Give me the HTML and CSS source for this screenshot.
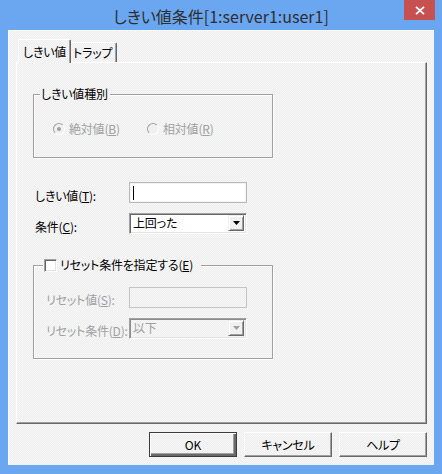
FILE: index.html
```html
<!DOCTYPE html>
<html lang="ja">
<head>
<meta charset="utf-8">
<title>しきい値条件</title>
<link rel="stylesheet" href="styles.css">
</head>
<body>
<div class="window">
  <div class="titlebar">
    <span class="title">しきい値条件[1:server1:user1]</span>
    <div class="close">
      <svg width="10" height="9" viewBox="0 0 10 9"><path d="M1 0.8 L9 8.2 M9 0.8 L1 8.2" stroke="#fff" stroke-width="1.8" fill="none"/></svg>
    </div>
  </div>
  <div class="client bg">
    <div class="tabs">
      <div class="tab active bg">しきい値</div>
      <div class="tab bg">トラップ</div>
    </div>
    <div class="panel bg">
      <div class="group g1">
        <span class="legend bg">しきい値種別</span>
        <div class="radios">
          <label class="radio r1"><span class="dot checked"></span><span>絶対値(<u>B</u>)</span></label>
          <label class="radio"><span class="dot"></span><span>相対値(<u>R</u>)</span></label>
        </div>
      </div>
      <div class="form">
        <span class="lbl">しきい値(<u>T</u>):</span>
        <div class="edit"><span class="caret"></span></div>
        <span class="lbl">条件(<u>C</u>):</span>
        <div class="combo"><span class="val">上回った</span><span class="arrow"><svg width="7" height="4" viewBox="0 0 7 4"><path d="M0 0 H7 L3.5 4 Z" fill="#000"/></svg></span></div>
      </div>
      <div class="group g2">
        <span class="legend bg chk-legend"><span class="check"></span><span>リセット条件を指定する(<u>E</u>)</span></span>
        <div class="form sub">
          <span class="lbl dis">リセット値(<u>S</u>):</span>
          <div class="edit disabled"></div>
          <span class="lbl dis">リセット条件(<u>D</u>):</span>
          <div class="combo disabled"><span class="val">以下</span><span class="arrow"><svg width="7" height="4" viewBox="0 0 7 4"><path d="M0 0 H7 L3.5 4 Z" fill="#a0a0a0"/></svg></span></div>
        </div>
      </div>
    </div>
    <div class="buttons">
      <div class="btn default bg">OK</div>
      <div class="btn bg">キャンセル</div>
      <div class="btn bg">ヘルプ</div>
    </div>
  </div>
</div>
</body>
</html>
```

FILE: styles.css
```css
* { box-sizing: border-box; }
html, body { margin: 0; padding: 0; }
body {
  width: 442px;
  height: 474px;
  overflow: hidden;
  font-family: "Noto Sans CJK JP", "Noto Sans", sans-serif;
  font-feature-settings: "palt";
  font-size: 12px;
  line-height: 16px;
  letter-spacing: -0.2px;
  color: #000;
}
u { text-decoration: underline; text-underline-offset: 1px; }

.bg {
  background: repeating-conic-gradient(#eeeeee 0 25%, #f7f7f7 0 50%) 0 0 / 2px 2px fixed;
}

.window {
  width: 442px;
  height: 474px;
  background: #6ba6f0;
  display: flex;
  flex-direction: column;
}

.titlebar {
  height: 30px;
  display: grid;
  grid-template-columns: 1fr auto 1fr;
}
.title {
  grid-column: 2;
  align-self: center;
  padding-top: 2px;
  font-size: 16px;
  line-height: 20px;
  letter-spacing: 0;
  color: #2e2e2e;
  white-space: nowrap;
}
.close {
  grid-column: 3;
  justify-self: end;
  align-self: start;
  margin-right: 7px;
  width: 31px;
  height: 20px;
  background: #c75050;
  display: flex;
  align-items: center;
  justify-content: center;
}

.client {
  margin: 0 8px;
  height: 435px;
  padding: 9px 7px 0 8px;
  box-shadow: inset 1px 1px 0 #fafafa;
}

.tabs {
  display: flex;
  align-items: flex-end;
  padding-left: 2px;
}
.tab {
  height: 20px;
  padding: 2px 0 0 2px;
  width: 46px;
  border-top: 1px solid #fff;
  border-right: 1px solid #696969;
  box-shadow: inset -1px 0 0 #a0a0a0;
  border-radius: 2px 2px 0 0;
  white-space: nowrap;
}
.tab.active {
  width: 53px;
  height: 24px;
  margin-bottom: -1px;
  padding: 4px 0 0 4px;
  border-left: 1px solid #fff;
  position: relative;
  z-index: 1;
}

.panel {
  height: 362px;
  border-top: 1px solid #fff;
  border-left: 1px solid #fff;
  border-right: 1px solid #696969;
  border-bottom: 1px solid #696969;
  box-shadow: inset -1px -1px 0 #a0a0a0;
  padding: 31px 0 0 16px;
}

.group {
  position: relative;
  width: 240px;
  border: 1px solid #a0a0a0;
  box-shadow: 1px 1px 0 #fff, inset 1px 1px 0 #fff;
}
.g1 { height: 64px; padding: 26px 0 0 19px; margin-bottom: 24px; }
.g2 { height: 94px; margin-top: 31px; padding: 21px 0 0 12px; }

.legend {
  position: absolute;
  left: 6px;
  top: -9px;
  padding: 0 2px 0 1px;
  white-space: nowrap;
}
.chk-legend {
  left: 9px;
  padding: 0 8px 0 1px;
  display: flex;
  align-items: center;
}
.check {
  width: 13px;
  height: 13px;
  margin-right: 3px;
  background: #fff;
  border: 1px solid;
  border-color: #a0a0a0 #fff #fff #a0a0a0;
  box-shadow: inset 1px 1px 0 #696969, inset -1px -1px 0 #e3e3e3;
}

.radios { display: flex; }
.radio {
  display: flex;
  align-items: center;
  gap: 4px;
  color: #a0a0a0;
  white-space: nowrap;
}
.r1 { width: 94px; }
.dot {
  width: 12px;
  height: 12px;
  border-radius: 50%;
  border: 1px solid;
  border-color: #a0a0a0 #fff #fff #a0a0a0;
  background: #f0f0f0;
  display: flex;
  align-items: center;
  justify-content: center;
}
.dot.checked::after {
  content: "";
  width: 4px;
  height: 4px;
  border-radius: 50%;
  background: #a0a0a0;
}

.form {
  display: grid;
  grid-template-columns: 96px 118px;
  grid-auto-rows: 21px;
  row-gap: 10px;
}
.form.sub { grid-template-columns: 83px 118px; }
.lbl {
  padding: 6px 0 0 2px;
  white-space: nowrap;
}
.sub .lbl { padding: 5px 0 0 0; }
.lbl.dis { color: #a0a0a0; }

.edit {
  height: 21px;
  background: #fff;
  border: 1px solid #b9b9b9;
  box-shadow: 0 0 0 1px #f4f4f4 inset;
  padding: 3px 0 0 3px;
}
.caret {
  display: block;
  width: 1px;
  height: 14px;
  background: #000;
}
.edit.disabled {
  background: transparent;
  border-color: #c4c4c4;
  box-shadow: none;
}

.combo {
  height: 21px;
  background: #fff;
  border: 1px solid;
  border-color: #a0a0a0 #fff #fff #a0a0a0;
  box-shadow: inset 1px 1px 0 #696969, inset -1px -1px 0 #e3e3e3;
  display: flex;
  align-items: center;
  padding: 1px 2px 2px 3px;
}
.combo .val { flex: 1; white-space: nowrap; }
.arrow {
  width: 16px;
  height: 16px;
  background: #f0f0f0;
  border: 1px solid;
  border-color: #f0f0f0 #696969 #696969 #f0f0f0;
  box-shadow: inset 1px 1px 0 #fff, inset -1px -1px 0 #a0a0a0;
  display: flex;
  align-items: center;
  justify-content: center;
}
.combo.disabled { background: transparent; color: #a0a0a0; box-shadow: inset 1px 1px 0 #8c8c8c, inset -1px -1px 0 #e3e3e3; }

.buttons {
  display: flex;
  justify-content: flex-end;
  gap: 7px;
  margin-top: 8px;
}
.btn {
  width: 88px;
  height: 25px;
  display: flex;
  align-items: center;
  justify-content: center;
  border: 1px solid;
  border-color: #fff #696969 #696969 #fff;
  box-shadow: inset -1px -1px 0 #a0a0a0;
}
.btn.default {
  border: 1px solid #3c3c3c;
  box-shadow: inset 1px 1px 0 #fff, inset -2px -2px 0 #696969, inset -3px -3px 0 #a0a0a0;
}
```
